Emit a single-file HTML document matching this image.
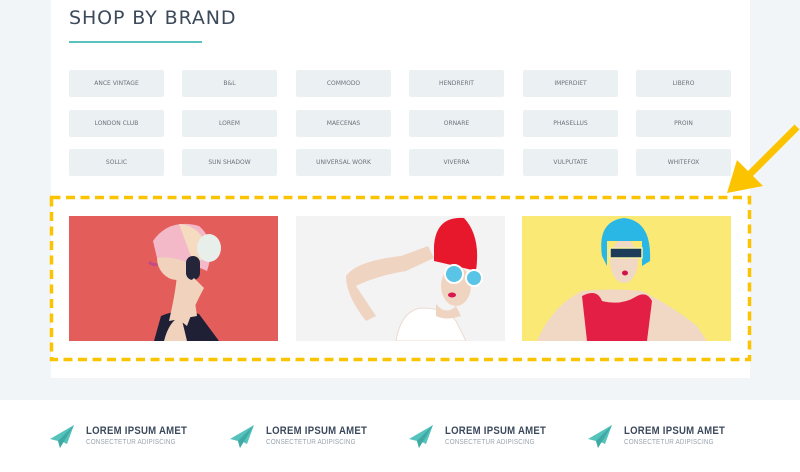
<!DOCTYPE html>
<html><head><meta charset="utf-8"><style>
*{margin:0;padding:0;box-sizing:border-box}
body{width:800px;height:472px;overflow:hidden;background:#f1f5f8;font-family:"Liberation Sans",sans-serif;position:relative}
.panel{position:absolute;left:51px;top:0;width:699px;height:378px;background:#fff}
h1{position:absolute;left:69px;top:7px;font-size:19px;font-weight:normal;letter-spacing:0.9px;color:#3c4a5c;font-family:"DejaVu Sans","Liberation Sans",sans-serif}
.ul{position:absolute;left:69px;top:41px;width:133px;height:2px;background:#5bc3bd}
.b{position:absolute;width:95px;height:27px;background:#ebf0f2;border-radius:2px;font-size:6px;color:#6a737d;text-align:center;line-height:27px;font-family:"DejaVu Sans",sans-serif}
.img{position:absolute;top:216px;width:209px;height:125px;overflow:hidden}
.foot{position:absolute;left:0;top:400px;width:800px;height:72px;background:#fff}
.f{position:absolute;top:425px}
.f svg{position:absolute;left:0;top:0}
.f .t{position:absolute;left:36px;top:0;font-family:"Liberation Sans Narrow","Liberation Sans",sans-serif;font-size:11px;font-weight:bold;color:#3c4a5c;white-space:nowrap;letter-spacing:.3px;transform:scaleX(.87);transform-origin:0 0}
.f .s{position:absolute;left:36px;top:14px;font-family:"Liberation Sans Narrow","Liberation Sans",sans-serif;font-size:7px;color:#9aa4ae;white-space:nowrap;letter-spacing:.2px;transform:scaleX(.9);transform-origin:0 0}
</style></head><body>
<div class="panel"></div>
<h1>SHOP BY BRAND</h1>
<div class="ul"></div>

<div class="b" style="left:69px;top:70px">ANCE VINTAGE</div>
<div class="b" style="left:182px;top:70px">B&amp;L</div>
<div class="b" style="left:296px;top:70px">COMMODO</div>
<div class="b" style="left:409px;top:70px">HENDRERIT</div>
<div class="b" style="left:523px;top:70px">IMPERDIET</div>
<div class="b" style="left:636px;top:70px">LIBERO</div>
<div class="b" style="left:69px;top:110px">LONDON CLUB</div>
<div class="b" style="left:182px;top:110px">LOREM</div>
<div class="b" style="left:296px;top:110px">MAECENAS</div>
<div class="b" style="left:409px;top:110px">ORNARE</div>
<div class="b" style="left:523px;top:110px">PHASELLUS</div>
<div class="b" style="left:636px;top:110px">PROIN</div>
<div class="b" style="left:69px;top:149px">SOLLIC</div>
<div class="b" style="left:182px;top:149px">SUN SHADOW</div>
<div class="b" style="left:296px;top:149px">UNIVERSAL WORK</div>
<div class="b" style="left:409px;top:149px">VIVERRA</div>
<div class="b" style="left:523px;top:149px">VULPUTATE</div>
<div class="b" style="left:636px;top:149px">WHITEFOX</div>

<div class="img" style="left:69px;background:#e35d5b">
<svg width="209" height="125">
<path d="M85 125 L92 100 Q110 92 130 98 L150 125Z" fill="#1f1f35"/>
<path d="M95 125 Q100 105 112 100 L118 125Z" fill="#f1d2bd"/>
<path d="M100 105 Q108 70 108 55 L122 55 Q125 80 128 100Z" fill="#f1d2bd"/>
<ellipse cx="108" cy="42" rx="20" ry="22" fill="#f1d2bd"/>
<path d="M84 25 Q100 2 130 10 Q148 25 138 55 L115 45 Q100 40 88 42Z" fill="#f4b9c8"/>
<path d="M110 8 Q135 10 140 40 L125 48Z" fill="#f5dcc0"/>
<rect x="117" y="40" width="14" height="24" rx="7" fill="#25253a"/>
<ellipse cx="140" cy="32" rx="12" ry="14" fill="#e8eeea"/>
<path d="M80 46 Q85 50 88 48" stroke="#c24a86" stroke-width="3" fill="none"/>
<path d="M105 100 Q115 70 125 62 L135 72 Q125 90 118 110Z" fill="#f1d2bd"/>
</svg></div>

<div class="img" style="left:296px;background:#f4f3f4">
<svg width="209" height="125">
<path d="M100 125 Q105 95 125 92 Q150 92 160 105 L170 125Z" fill="#fff" stroke="#eadbd2"/>
<path d="M50 60 Q60 45 105 40 L132 30 L138 42 L110 55 Q80 60 60 70 L80 100 L70 105 Q50 80 50 60Z" fill="#f0d4c2"/>
<ellipse cx="160" cy="70" rx="15" ry="20" fill="#f0d4c2"/>
<path d="M140 88 Q150 100 160 90 L165 100 Q150 105 140 100Z" fill="#f0d4c2"/>
<path d="M138 30 Q140 0 168 2 Q185 20 180 55 Q160 50 138 45Z" fill="#e8182c"/>
<circle cx="158" cy="58" r="9" fill="#5ac4e6" stroke="#fff" stroke-width="2"/>
<circle cx="178" cy="62" r="8" fill="#5ac4e6" stroke="#fff" stroke-width="2"/>
<ellipse cx="156" cy="79" rx="4" ry="2.5" fill="#d81950"/>
</svg></div>

<div class="img" style="left:522px;background:#fae975">
<svg width="209" height="125">
<path d="M15 125 Q30 90 60 75 Q90 72 120 75 Q150 90 175 110 L185 125Z" fill="#f1d8c5"/>
<path d="M65 125 L60 80 Q75 72 80 85 Q100 90 115 80 Q125 75 130 85 L125 125Z" fill="#e41f45"/>
<ellipse cx="102" cy="45" rx="14" ry="22" fill="#f1d8c5"/>
<path d="M80 40 Q75 5 102 2 Q130 5 128 45 L120 50 L120 25 L85 25 L85 50Z" fill="#2ab7e6"/>
<rect x="88" y="32" width="32" height="10" fill="#1c3c5a" stroke="#f6f0a8" stroke-width="1.5"/>
<ellipse cx="103" cy="57" rx="3" ry="2.5" fill="#d2124a"/>
</svg></div>

<svg style="position:absolute;left:0;top:0" width="800" height="472">
<rect x="51.5" y="197.5" width="698" height="162" fill="none" stroke="#fcc400" stroke-width="3.5" stroke-dasharray="9 5.5"/>
<line x1="797" y1="127" x2="748" y2="176" stroke="#fcc400" stroke-width="7"/>
<polygon points="727,193 737,160 763,186" fill="#fcc400"/>
</svg>

<div class="foot"></div>
<div class="f" style="left:50px"><svg width="26" height="24"><polygon points="24,0 0,14 8,16 10,23 13,17 17,19" fill="#55c2bc"/><polygon points="24,0 8,16 10,23" fill="#3fa9a3"/></svg><div class="t">LOREM IPSUM AMET</div><div class="s">CONSECTETUR ADIPISCING</div></div>
<div class="f" style="left:230px"><svg width="26" height="24"><polygon points="24,0 0,14 8,16 10,23 13,17 17,19" fill="#55c2bc"/><polygon points="24,0 8,16 10,23" fill="#3fa9a3"/></svg><div class="t">LOREM IPSUM AMET</div><div class="s">CONSECTETUR ADIPISCING</div></div>
<div class="f" style="left:409px"><svg width="26" height="24"><polygon points="24,0 0,14 8,16 10,23 13,17 17,19" fill="#55c2bc"/><polygon points="24,0 8,16 10,23" fill="#3fa9a3"/></svg><div class="t">LOREM IPSUM AMET</div><div class="s">CONSECTETUR ADIPISCING</div></div>
<div class="f" style="left:588px"><svg width="26" height="24"><polygon points="24,0 0,14 8,16 10,23 13,17 17,19" fill="#55c2bc"/><polygon points="24,0 8,16 10,23" fill="#3fa9a3"/></svg><div class="t">LOREM IPSUM AMET</div><div class="s">CONSECTETUR ADIPISCING</div></div>
</body></html>
